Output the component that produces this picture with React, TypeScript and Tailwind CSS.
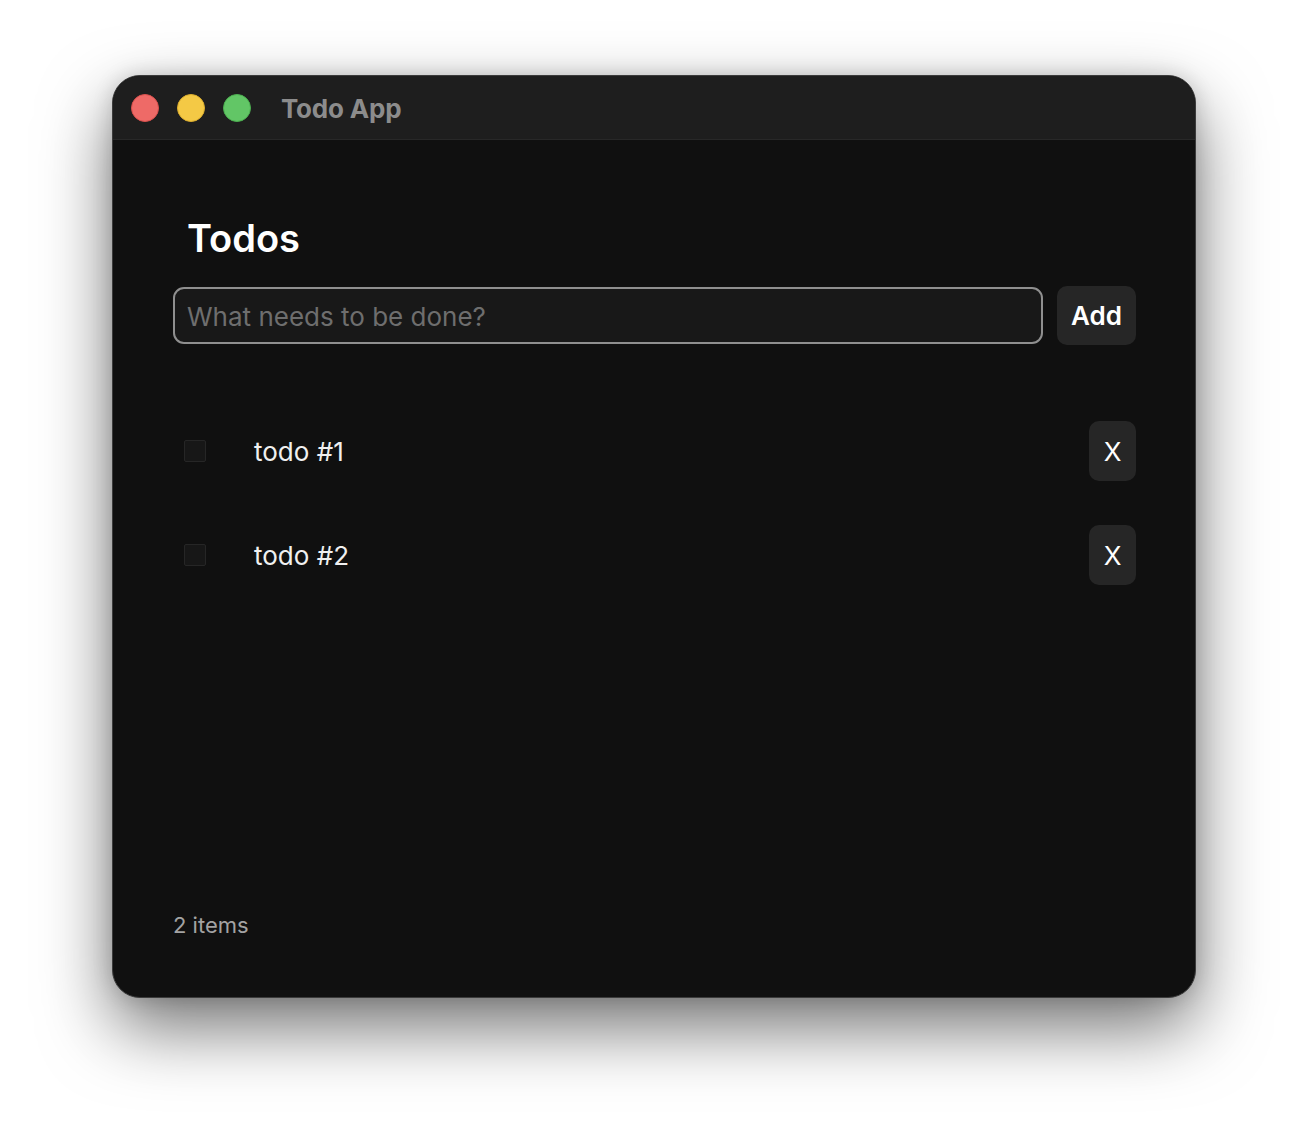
import React from "react";

export default function App() {
  const todos = ["todo #1", "todo #2"];
  return (
    <div
      className="w-[1308px] h-[1146px] bg-white pt-[75px] pl-[112px]"
      style={{ fontFamily: "Inter, 'Noto Sans', sans-serif" }}
    >
      <div className="w-[1084px] h-[923px] rounded-[28px] overflow-hidden flex flex-col bg-[#101010] border border-[#3c3c3c] shadow-[0_30px_70px_rgba(0,0,0,0.55),0_0_20px_rgba(0,0,0,0.15)]">
        <div className="h-[64px] shrink-0 bg-[#1e1e1e] border-b border-[#282828] flex items-center pl-[18px]">
          <div className="flex items-center gap-[18px]">
            <span className="w-[28px] h-[28px] rounded-full bg-[#ee6a67] border border-[#d9504d]" />
            <span className="w-[28px] h-[28px] rounded-full bg-[#f4c945] border border-[#dcae2e]" />
            <span className="w-[28px] h-[28px] rounded-full bg-[#62c666] border border-[#4caf50]" />
          </div>
          <span className="ml-[30px] mt-[2px] text-[26px] font-bold text-[#8c8c8c] tracking-[-0.2px]">Todo App</span>
        </div>
        <div className="flex-1 flex flex-col pl-[60px] pr-[59px] pt-[75px] pb-[57px]">
          <h1 className="pl-[14px] text-[38px] leading-[46px] font-semibold text-white">Todos</h1>
          <div className="mt-[25px] flex items-center gap-[14px]">
            <div className="flex-1 h-[57px] rounded-[11px] border-2 border-[#8f8f8f] bg-[#181818] flex items-center px-[12px]">
              <span className="mt-[1px] text-[26px] text-[#6e6e6e]">What needs to be done?</span>
            </div>
            <div className="w-[79px] h-[59px] rounded-[10px] bg-[#262626] flex items-center justify-center text-[26px] font-semibold text-white">
              Add
            </div>
          </div>
          <div className="mt-[54px] flex-1 flex flex-col">
            {todos.map((t) => (
              <div key={t} className="h-[104px] flex items-center">
                <span className="ml-[11px] w-[22px] h-[22px] rounded-[2px] bg-[#171717] border border-[#262626]" />
                <span className="ml-[48px] flex-1 text-[26px] text-[#f0f0f0]">{t}</span>
                <div className="w-[47px] h-[60px] rounded-[10px] bg-[#262626] flex items-center justify-center text-[26px] text-white">
                  X
                </div>
              </div>
            ))}
          </div>
          <div className="text-[22px] leading-[30px] text-[#a3a3a3]">2 items</div>
        </div>
      </div>
    </div>
  );
}
